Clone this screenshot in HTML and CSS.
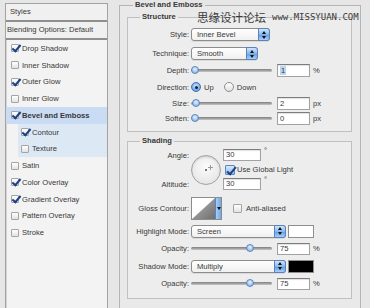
FILE: index.html
```html
<!DOCTYPE html>
<html lang="en">

<head>
    <meta charset="UTF-8">
    <meta name="viewport" content="width=device-width, initial-scale=1.0">
    <title>Layer Style</title>

    <link rel="stylesheet" href="styles.css">
</head>

<body>
    <div class="dialog">
        <div class="styles-list">
            <div class="list-head">Styles</div>
            <div class="list-blend">Blending Options: Default</div>
            <ul class="effects">
                <li><span class="check on"></span>Drop Shadow</li>
                <li><span class="check"></span>Inner Shadow</li>
                <li><span class="check on"></span>Outer Glow</li>
                <li><span class="check"></span>Inner Glow</li>
                <li class="selected"><span class="check on"></span><b>Bevel and Emboss</b></li>
                <li class="sub"><span class="check on"></span>Contour</li>
                <li class="sub"><span class="check"></span>Texture</li>
                <li><span class="check"></span>Satin</li>
                <li><span class="check on"></span>Color Overlay</li>
                <li><span class="check on"></span>Gradient Overlay</li>
                <li><span class="check"></span>Pattern Overlay</li>
                <li><span class="check"></span>Stroke</li>
            </ul>
        </div>

        <fieldset class="effect-box">
            <legend>Bevel and Emboss</legend>

            <fieldset class="group structure">
                <legend>Structure</legend>
                <div class="row row-sel">
                    <label>Style:</label>
                    <div class="select sel-style">Inner Bevel<span class="stepper"></span></div>
                </div>
                <div class="row row-sel">
                    <label>Technique:</label>
                    <div class="select sel-tech">Smooth<span class="stepper"></span></div>
                </div>
                <div class="row row-sl">
                    <label>Depth:</label>
                    <div class="slider"><span class="thumb" style="--v:0"></span></div>
                    <div class="field"><span class="picked">1</span></div>
                    <span class="unit">%</span>
                </div>
                <div class="row row-radio">
                    <label>Direction:</label>
                    <span class="radio on"></span><span class="opt">Up</span>
                    <span class="radio"></span><span class="opt">Down</span>
                </div>
                <div class="row row-sl">
                    <label>Size:</label>
                    <div class="slider"><span class="thumb" style="--v:0.01"></span></div>
                    <div class="field">2</div>
                    <span class="unit">px</span>
                </div>
                <div class="row row-sl">
                    <label>Soften:</label>
                    <div class="slider"><span class="thumb" style="--v:0"></span></div>
                    <div class="field">0</div>
                    <span class="unit">px</span>
                </div>
            </fieldset>

            <fieldset class="group shading">
                <legend>Shading</legend>
                <div class="angle-block">
                    <label class="lbl-angle">Angle:</label>
                    <div class="wheel"><span class="cross"></span></div>
                    <div class="deg-row">
                        <div class="field deg">30</div><span class="unit">°</span>
                    </div>
                    <div class="global">
                        <span class="check big on"></span>Use Global Light
                    </div>
                    <label class="lbl-alt">Altitude:</label>
                    <div class="deg-row alt">
                        <div class="field deg">30</div><span class="unit">°</span>
                    </div>
                </div>
                <div class="row row-contour">
                    <label>Gloss Contour:</label>
                    <div class="contour">
                        <svg viewBox="0 0 23 21" preserveAspectRatio="none">
                            <defs>
                                <linearGradient id="cg" x1="0" y1="0" x2="1" y2="1">
                                    <stop offset="0" stop-color="#b8b8b8"/>
                                    <stop offset="1" stop-color="#6f6f6f"/>
                                </linearGradient>
                            </defs>
                            <rect width="23" height="21" fill="#fff"/>
                            <polygon points="0,21 23,0 23,21" fill="url(#cg)"/>
                        </svg>
                        <span class="drop"></span>
                    </div>
                    <span class="check plain"></span><span>Anti-aliased</span>
                </div>
                <div class="row row-sel first-mode">
                    <label>Highlight Mode:</label>
                    <div class="select sel-mode">Screen<span class="stepper"></span></div>
                    <span class="swatch white"></span>
                </div>
                <div class="row row-sl">
                    <label>Opacity:</label>
                    <div class="slider"><span class="thumb" style="--v:0.75"></span></div>
                    <div class="field">75</div>
                    <span class="unit">%</span>
                </div>
                <div class="row row-sel">
                    <label>Shadow Mode:</label>
                    <div class="select sel-mode">Multiply<span class="stepper"></span></div>
                    <span class="swatch black"></span>
                </div>
                <div class="row row-sl">
                    <label>Opacity:</label>
                    <div class="slider"><span class="thumb" style="--v:0.75"></span></div>
                    <div class="field">75</div>
                    <span class="unit">%</span>
                </div>
            </fieldset>
        </fieldset>

        <div class="watermark">
            <span class="cn">思缘设计论坛</span>
            <span class="url">www.MISSYUAN.COM</span>
        </div>
    </div>
</body>

</html>
```

FILE: styles.css
```css
* {
    margin: 0;
    padding: 0;
    box-sizing: border-box;
}

html,
body {
    height: 100%;
    overflow: hidden;
}

body {
    background: #e6e6e6;
    font-family: "Liberation Sans", Arial, sans-serif;
    font-size: 7.6px;
    color: #383838;
}

.dialog {
    position: relative;
    display: flex;
    align-items: flex-start;
    padding: 3px 0 0 5px;
}

/* left list of effects */

.styles-list {
    flex: none;
    width: 103px;
    height: 330px;
    background: #f3f3f3;
    border: 1px solid #a3a3a3;
    box-shadow: inset 1px 0 0 #d4d4d4;
}

.list-head,
.list-blend {
    height: 18px;
    line-height: 16px;
    border-bottom: 2px solid #8f8f8f;
    background: #f0f0f0;
}

.list-head {
    padding-left: 4px;
}

.list-blend {
    padding-left: 1px;
}

.effects {
    list-style: none;
}

.effects li {
    display: flex;
    align-items: center;
    height: 16.75px;
    padding-left: 5px;
}

.effects li.selected {
    background: #c9dcf3;
}

.effects li.sub {
    margin-left: 12px;
    padding-left: 3px;
    background: #dde8f5;
}

.check {
    position: relative;
    flex: none;
    width: 8px;
    height: 8px;
    margin-right: 3px;
    border: 1px solid #a4a4a4;
    border-radius: 1px;
    background: linear-gradient(#ffffff, #e2e2e2);
}

.check.on::after {
    content: "";
    position: absolute;
    left: 2px;
    top: -2px;
    width: 3px;
    height: 7px;
    border: solid #1d3f86;
    border-width: 0 2px 2px 0;
    transform: rotate(40deg);
}

.check.big {
    width: 10px;
    height: 10px;
    margin: 0 2px 0 2px;
    border-color: #5d86bd;
    background: linear-gradient(#d8e8fb, #8dbbee);
}

.check.big::after {
    left: 3px;
    top: -1px;
    height: 8px;
}

.check.plain {
    width: 9px;
    height: 9px;
    margin: 0 4px 0 11px;
}

/* right side */

.effect-box {
    flex: none;
    width: 242px;
    height: 340px;
    margin: -2px 0 0 11px;
    border: 1px solid #b4b4b4;
    background: #e9e9e9;
}

legend {
    margin-left: 13px;
    padding: 0 2px;
    font-weight: bold;
    line-height: 8px;
}

.group {
    margin: 4px 8px 0 7px;
    border: 1px solid #c0c0c0;
    background: #ededed;
}

.group legend {
    margin-left: 12px;
}

.structure {
    padding: 4px 0 5px;
}

.shading {
    margin-top: 5px;
    padding: 4px 0 6px;
}

.row {
    display: flex;
    align-items: center;
}

.row > label,
.angle-block > label {
    flex: none;
    width: 61px;
    margin-right: 2px;
    text-align: right;
}

.structure .row-sel {
    height: 19px;
}

.structure .row-sl {
    height: 15px;
}

.row-radio {
    height: 18px;
}

.shading .row-sel {
    height: 18px;
}

.shading .row-sl {
    height: 17px;
}

.first-mode {
    margin-top: 2px;
}

/* controls */

.select {
    position: relative;
    height: 13px;
    line-height: 11px;
    padding-left: 5px;
    border: 1px solid #8c8c8c;
    border-radius: 3px;
    background: linear-gradient(#ffffff, #f0f0f0);
    box-shadow: 0 1px 0 rgba(0, 0, 0, 0.08);
}

.sel-style {
    width: 79px;
}

.sel-tech {
    width: 67px;
}

.sel-mode {
    width: 95px;
}

.stepper {
    position: absolute;
    top: -1px;
    right: -1px;
    bottom: -1px;
    width: 12px;
    border: 1px solid #5a83bd;
    border-radius: 0 3px 3px 0;
    background: linear-gradient(#d3e6fb, #86b7ec 50%, #5d9be2 51%, #a9d0f8);
}

.stepper::before,
.stepper::after {
    content: "";
    position: absolute;
    left: 2.5px;
    border-left: 2.5px solid transparent;
    border-right: 2.5px solid transparent;
}

.stepper::before {
    top: 1.5px;
    border-bottom: 3px solid #111;
}

.stepper::after {
    bottom: 1.5px;
    border-top: 3px solid #111;
}

.slider {
    position: relative;
    flex: none;
    width: 81px;
    height: 3px;
    border-radius: 2px;
    background: linear-gradient(#7d7d7d, #c6c6c6);
}

.thumb {
    position: absolute;
    top: -3px;
    left: calc(4px + (100% - 8px) * var(--v));
    width: 8px;
    height: 8px;
    margin-left: -4px;
    border: 1px solid #5d86bd;
    border-radius: 50%;
    background: radial-gradient(circle at 50% 35%, #e8f2fd, #8dbaec 75%);
}

.field {
    flex: none;
    width: 33px;
    height: 13px;
    margin-left: 5px;
    padding-left: 2px;
    line-height: 11px;
    background: #fff;
    border: 1px solid #a2a2a2;
    border-top-color: #7c7c7c;
    box-shadow: inset 0 1px 1px rgba(0, 0, 0, 0.12);
}

.shading .field {
    height: 12px;
    line-height: 10px;
}

.picked {
    background: #b9d5f6;
    padding: 0 1px;
}

.unit {
    margin-left: 3px;
}

.radio {
    position: relative;
    flex: none;
    width: 10px;
    height: 10px;
    margin-right: 3px;
    border: 1px solid #8e8e8e;
    border-radius: 50%;
    background: linear-gradient(#ffffff, #e0e0e0);
}

.radio.on {
    border-color: #3e6fb2;
    background: radial-gradient(circle at 50% 40%, #d3e6fb, #5f9de2 80%);
}

.radio.on::after {
    content: "";
    position: absolute;
    left: 2.5px;
    top: 2.5px;
    width: 3px;
    height: 3px;
    border-radius: 50%;
    background: #0d1b33;
}

.opt {
    margin-right: 10px;
}

/* angle / altitude */

.angle-block {
    display: grid;
    grid-template-columns: 61px 30px auto;
    grid-template-rows: 12px 17px 12px;
    column-gap: 2px;
    align-items: center;
}

.angle-block > label {
    margin-right: 0;
}

.lbl-angle {
    grid-row: 1;
    grid-column: 1;
}

.lbl-alt {
    grid-row: 3;
    grid-column: 1;
}

.wheel {
    position: relative;
    grid-row: 1 / 4;
    grid-column: 2;
    width: 30px;
    height: 30px;
    border: 1px solid #a2a2a2;
    border-radius: 50%;
    background: radial-gradient(circle at 50% 40%, #fbfbfb, #e0e0e0);
    box-shadow: inset 0 1px 2px rgba(0, 0, 0, 0.15);
}

.wheel::before {
    content: "";
    position: absolute;
    left: 13px;
    top: 13px;
    width: 2px;
    height: 2px;
    background: #777;
}

.cross {
    position: absolute;
    left: 16px;
    top: 9px;
    width: 5px;
    height: 5px;
}

.cross::before,
.cross::after {
    content: "";
    position: absolute;
    background: #9a9a9a;
}

.cross::before {
    left: 0;
    top: 2px;
    width: 5px;
    height: 1px;
}

.cross::after {
    left: 2px;
    top: 0;
    width: 1px;
    height: 5px;
}

.deg-row {
    display: flex;
    align-items: flex-start;
    grid-row: 1;
    grid-column: 3;
}

.deg-row.alt {
    grid-row: 3;
}

.field.deg {
    width: 38px;
    margin-left: 0;
}

.deg-row .unit {
    margin-top: -3px;
}

.global {
    display: flex;
    align-items: center;
    grid-row: 2;
    grid-column: 3;
}

.row-contour {
    height: 23px;
    margin-top: 7px;
}

.contour {
    display: flex;
    flex: none;
    width: 31px;
    height: 23px;
    border: 1px solid #8c8c8c;
    background: #fff;
}

.contour svg {
    width: 23px;
    height: 21px;
}

.drop {
    position: relative;
    flex: 1;
    border-left: 1px solid #5a83bd;
    background: linear-gradient(to right, #a9cdf6, #6fa7e6);
}

.drop::after {
    content: "";
    position: absolute;
    left: 1px;
    top: 9px;
    border-left: 2px solid transparent;
    border-right: 2px solid transparent;
    border-top: 3px solid #111;
}

.swatch {
    flex: none;
    width: 26px;
    height: 13px;
    margin-left: 2px;
    border: 1px solid #8e8e8e;
}

.swatch.white {
    background: #fff;
}

.swatch.black {
    background: #000;
}

/* watermark laid over the top border */

.watermark {
    position: absolute;
    left: 197px;
    top: 10px;
    display: flex;
    align-items: center;
    height: 14px;
    color: #3a3a3a;
    white-space: nowrap;
}

.watermark .cn {
    font-family: "Noto Sans CJK SC", sans-serif;
    font-size: 11.5px;
    line-height: 14px;
}

.watermark .url {
    margin-left: 6px;
    font-family: "DejaVu Sans Mono", monospace;
    font-size: 9px;
}
```
